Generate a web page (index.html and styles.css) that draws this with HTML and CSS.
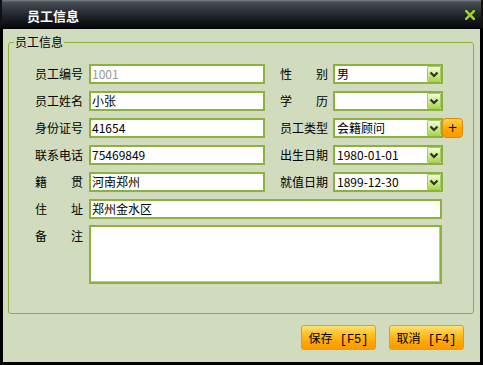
FILE: index.html
```html
<!DOCTYPE html>
<html lang="zh-CN">
<head>
    <meta charset="UTF-8">
    <title>员工信息</title>
    <link rel="stylesheet" href="styles.css">
</head>
<body>

    <div class="win">
        <div class="titlebar">
            <span class="title">员工信息</span>
            <svg class="close" width="10" height="10" viewBox="0 0 10 10">
                <path d="M1 1 L9 9 M9 1 L1 9" stroke="#9bd02a" stroke-width="2.6" stroke-linecap="square"/>
            </svg>
        </div>

        <div class="body">
            <fieldset class="group">
                <legend>员工信息</legend>

                <div class="form">
                    <!--1행-->
                    <span class="lbl">员工编号</span>
                    <div class="cell"><div class="inp grey">1001</div></div>
                    <span class="lbl">性 别</span>
                    <div class="sel"><span>男</span><i class="drop"><svg width="12" height="14" viewBox="0 0 12 14"><path d="M2.5 5.5 L6 9 L9.5 5.5" fill="none" stroke="#2e3324" stroke-width="2.2"/></svg></i></div>
                    <div></div>

                    <!--2행-->
                    <span class="lbl">员工姓名</span>
                    <div class="cell"><div class="inp">小张</div></div>
                    <span class="lbl">学 历</span>
                    <div class="sel"><span></span><i class="drop"><svg width="12" height="14" viewBox="0 0 12 14"><path d="M2.5 5.5 L6 9 L9.5 5.5" fill="none" stroke="#2e3324" stroke-width="2.2"/></svg></i></div>
                    <div></div>

                    <!--3행-->
                    <span class="lbl">身份证号</span>
                    <div class="cell"><div class="inp">41654</div></div>
                    <span class="lbl">员工类型</span>
                    <div class="sel"><span>会籍顾问</span><i class="drop"><svg width="12" height="14" viewBox="0 0 12 14"><path d="M2.5 5.5 L6 9 L9.5 5.5" fill="none" stroke="#2e3324" stroke-width="2.2"/></svg></i></div>
                    <button class="plus">+</button>

                    <!--4행-->
                    <span class="lbl">联系电话</span>
                    <div class="cell"><div class="inp">75469849</div></div>
                    <span class="lbl">出生日期</span>
                    <div class="sel"><span>1980-01-01</span><i class="drop"><svg width="12" height="14" viewBox="0 0 12 14"><path d="M2.5 5.5 L6 9 L9.5 5.5" fill="none" stroke="#2e3324" stroke-width="2.2"/></svg></i></div>
                    <div></div>

                    <!--5행-->
                    <span class="lbl">籍 贯</span>
                    <div class="cell"><div class="inp">河南郑州</div></div>
                    <span class="lbl">就值日期</span>
                    <div class="sel"><span>1899-12-30</span><i class="drop"><svg width="12" height="14" viewBox="0 0 12 14"><path d="M2.5 5.5 L6 9 L9.5 5.5" fill="none" stroke="#2e3324" stroke-width="2.2"/></svg></i></div>
                    <div></div>

                    <span class="lbl">住 址</span>
                    <div class="wide"><div class="inp">郑州金水区</div></div>

                    <span class="lbl top">备 注</span>
                    <div class="wide memo-cell"><div class="memo"></div></div>
                </div>
            </fieldset>

            <div class="actions">
                <button class="btn">保存 [F5]</button>
                <button class="btn">取消 [F4]</button>
            </div>
        </div>
    </div>

</body>
</html>
```

FILE: styles.css
```css
body{
    margin: 0;
    font-family: "Noto Sans CJK SC", "DejaVu Sans", sans-serif;
    font-size: 12px;
    color: #000;
}

.win{
    width: 483px;
    height: 365px;
    display: flex;
    flex-direction: column;
}

/*타이틀바*/
.titlebar{
    height: 28px;
    flex: none;
    display: flex;
    align-items: center;
    justify-content: space-between;
    padding: 0 8px 0 27px;
    border-bottom: 1px solid #000;
    background: linear-gradient(#7a7f86 0, #484d54 8%, #2c3137 40%, #12171c 75%, #05080b 100%);
    box-shadow: inset 2px 0 0 #111, inset -2px 0 0 #111;
}
.title{
    color: #fff;
    font-size: 13px;
    font-weight: bold;
    padding-top: 2px;
}
.close{
    display: block;
    margin-top: 1px;
}

/*본문*/
.body{
    flex: 1;
    background-color: #d0dcbd;
    border: 3px solid #000;
    border-top: 0;
}

.group{
    margin: 6px 6px 0 5px;
    padding: 15px 0 13px 0;
    border: 1px solid #8cb23e;
    border-radius: 3px;
}
.group legend{
    margin-left: 5px;
    padding: 0 1px;
    line-height: 14px;
    font-size: 12px;
}

.form{
    display: grid;
    grid-template-columns: 54px 191px 53px 110px 20px;
    grid-auto-rows: 20px;
    row-gap: 7px;
    align-items: center;
    padding-left: 26px;
}
.form .wide{
    grid-column: 2 / -1;
}
.form .memo-cell{
    grid-row: span 3;
    align-self: stretch;
    margin-top: -1px;
}

.lbl{
    display: block;
    width: 48px;
    white-space: nowrap;
    text-align: justify;
    text-align-last: justify;
    line-height: 20px;
}
.lbl.top{
    align-self: start;
}

.inp, .memo{
    box-sizing: border-box;
    height: 20px;
    border: 2px solid #8cb23e;
    background-color: #fff;
    padding-left: 1px;
    line-height: 16px;
    white-space: nowrap;
}
.cell .inp{
    width: 176px;
}
.wide .inp, .wide .memo{
    width: 353px;
}
.memo{
    height: 59px;
    box-shadow: inset -1px -1px 0 #b7c9a2;
}
.grey{
    color: #9a9a9a;
}

/*콤보박스*/
.sel{
    box-sizing: border-box;
    height: 20px;
    width: 110px;
    border: 2px solid #8cb23e;
    background-color: #fff;
    display: flex;
    justify-content: space-between;
    padding-left: 2px;
    line-height: 16px;
}
.drop{
    width: 14px;
    height: 16px;
    box-sizing: border-box;
    border: 1px solid #a9c86a;
    border-radius: 1px;
    background: linear-gradient(#f3fbdc, #cbe98a 55%, #a9d84a);
    display: flex;
    align-items: center;
    justify-content: center;
}
.drop svg{
    display: block;
}

.plus{
    width: 21px;
    height: 20px;
    margin-left: -1px;
    padding: 0;
    border: 1px solid #e08a00;
    border-radius: 4px;
    background: linear-gradient(#ffd34a, #ffa800 55%, #ff9a00);
    font-family: "DejaVu Sans", sans-serif;
    font-size: 12px;
    line-height: 16px;
    color: #000;
}

/*버튼*/
.actions{
    display: flex;
    justify-content: flex-end;
    gap: 13px;
    margin-top: 11px;
    padding-right: 16px;
}
.btn{
    width: 75px;
    height: 25px;
    padding: 0;
    border: 1px solid #e79c10;
    border-radius: 3px;
    background: linear-gradient(#ffe27a 0, #ffc630 30%, #ffa600 70%, #ff9900 100%);
    font-family: "Liberation Mono", "Noto Sans CJK SC", monospace;
    font-size: 12px;
    color: #000;
}
```
